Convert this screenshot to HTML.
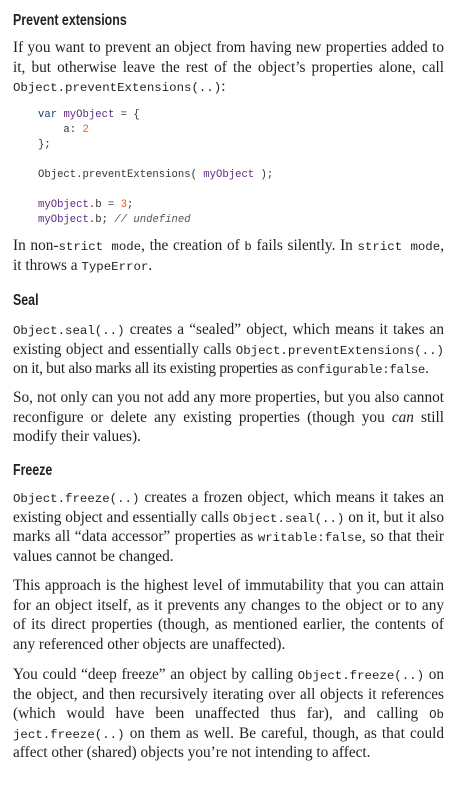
<!DOCTYPE html>
<html><head><meta charset="utf-8"><style>
body{margin:0;background:#fff;width:475px;height:797px;position:relative;overflow:hidden;color:#231f20;font-family:"Liberation Serif",serif;font-size:15.3px}
.b{position:absolute;left:13px;width:431px}
.l{height:19.6px;line-height:19.6px;white-space:nowrap;text-align:justify;text-align-last:justify}
.l.e{text-align-last:left}
h{display:block;position:absolute;left:13px;font-family:"Liberation Sans Narrow","Liberation Sans",sans-serif;font-weight:bold;font-size:15.5px;transform:scaleX(0.8);transform-origin:0 0;color:#231f20}
code{font-family:"Liberation Mono",monospace;font-size:12.4px}
pre{position:absolute;left:38px;margin:0;font-family:"Liberation Mono",monospace;font-size:10.6px;line-height:15px;color:#333}
.k{color:#1b3a7a}.v{color:#5b2a86}.n{color:#e8601c}.c{color:#555;font-style:italic}
</style></head><body>
<h style="top:12px">Prevent extensions</h>
<div class="b" style="top:38px">
<div class="l">If you want to prevent an object from having new properties added to</div>
<div class="l">it, but otherwise leave the rest of the object’s properties alone, call</div>
<div class="l e"><code>Object.preventExtensions(..)</code>:</div>
</div>
<pre style="top:108px"><span class="k">var</span> <span class="v">myObject</span> = {
    a: <span class="n">2</span>
};

Object.preventExtensions( <span class="v">myObject</span> );

<span class="v">myObject</span>.b = <span class="n">3</span>;
<span class="v">myObject</span>.b; <span class="c">// undefined</span></pre>
<div class="b" style="top:236px">
<div class="l">In non-<code>strict mode</code>, the creation of <code>b</code> fails silently. In <code>strict mode</code>,</div>
<div class="l e">it throws a <code>TypeError</code>.</div>
</div>
<h style="top:292px">Seal</h>
<div class="b" style="top:320px">
<div class="l"><code>Object.seal(..)</code> creates a “sealed” object, which means it takes an</div>
<div class="l">existing object and essentially calls <code>Object.preventExtensions(..)</code></div>
<div class="l e" style="letter-spacing:-0.3px">on it, but also marks all its existing properties as <code>configurable:false</code>.</div>
</div>
<div class="b" style="top:388px">
<div class="l">So, not only can you not add any more properties, but you also cannot</div>
<div class="l">reconfigure or delete any existing properties (though you <i>can</i> still</div>
<div class="l e">modify their values).</div>
</div>
<h style="top:462px">Freeze</h>
<div class="b" style="top:488px">
<div class="l"><code>Object.freeze(..)</code> creates a frozen object, which means it takes an</div>
<div class="l">existing object and essentially calls <code>Object.seal(..)</code> on it, but it also</div>
<div class="l">marks all “data accessor” properties as <code>writable:false</code>, so that their</div>
<div class="l e">values cannot be changed.</div>
</div>
<div class="b" style="top:576px">
<div class="l">This approach is the highest level of immutability that you can attain</div>
<div class="l">for an object itself, as it prevents any changes to the object or to any</div>
<div class="l">of its direct properties (though, as mentioned earlier, the contents of</div>
<div class="l e">any referenced other objects are unaffected).</div>
</div>
<div class="b" style="top:665px">
<div class="l">You could “deep freeze” an object by calling <code>Object.freeze(..)</code> on</div>
<div class="l">the object, and then recursively iterating over all objects it references</div>
<div class="l">(which would have been unaffected thus far), and calling <code>Ob</code></div>
<div class="l"><code>ject.freeze(..)</code> on them as well. Be careful, though, as that could</div>
<div class="l e">affect other (shared) objects you’re not intending to affect.</div>
</div>
</body></html>
